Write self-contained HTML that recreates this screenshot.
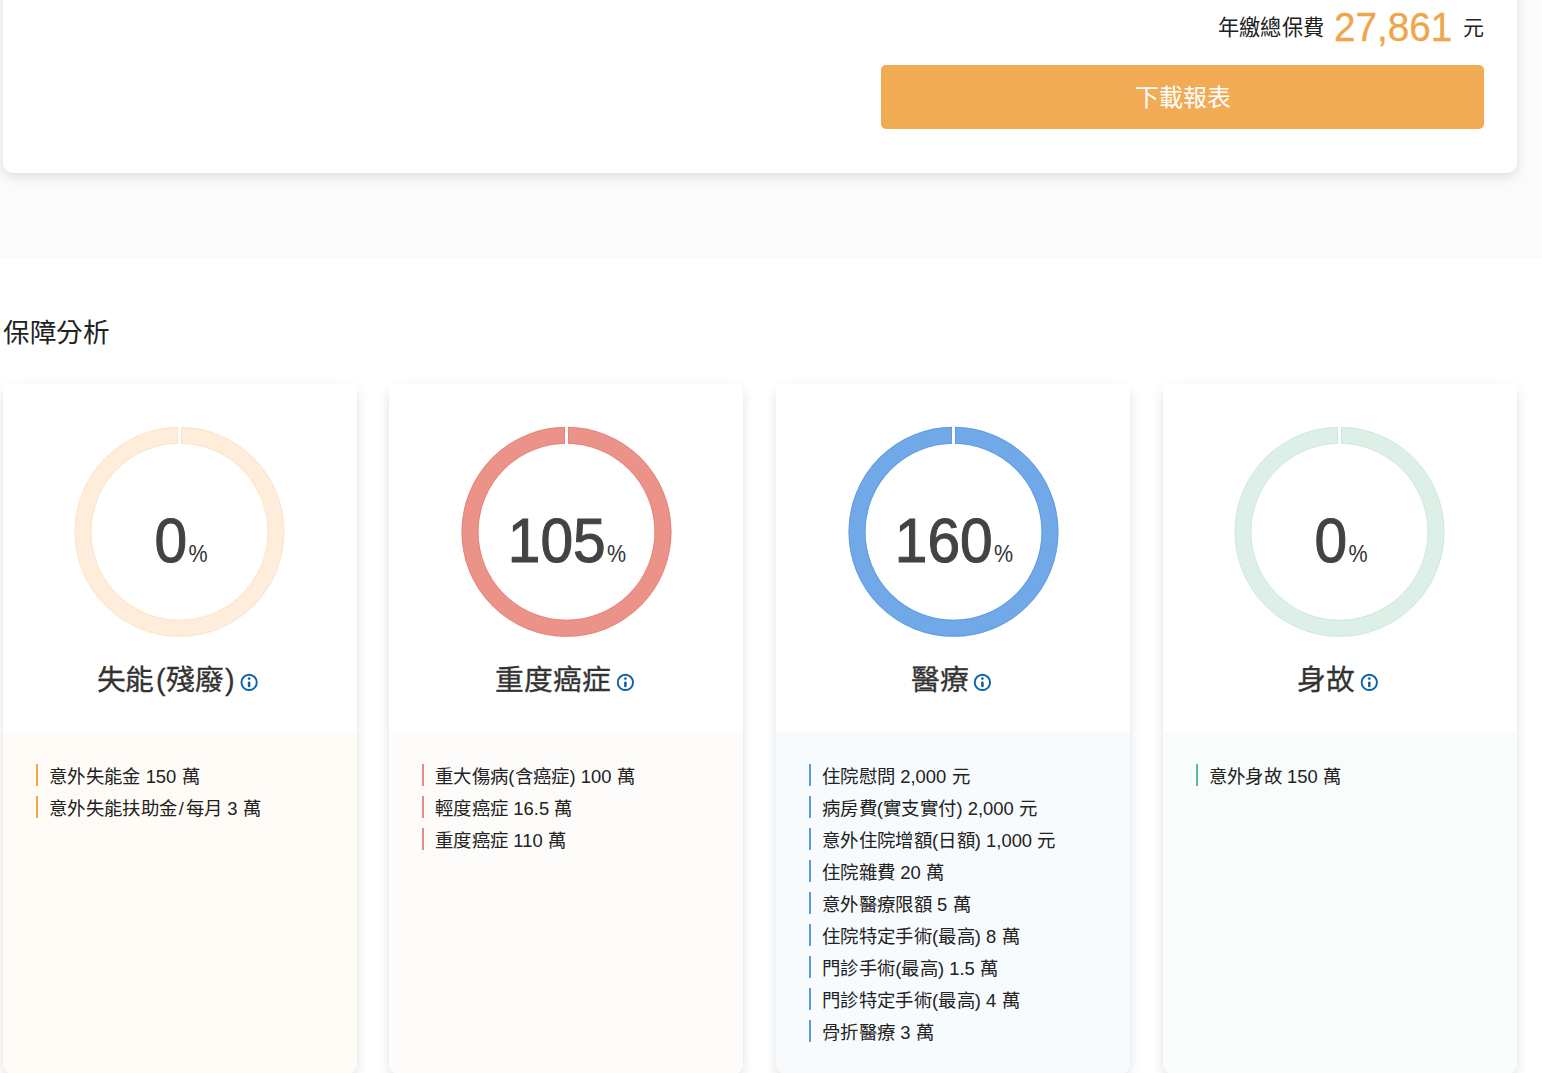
<!DOCTYPE html>
<html lang="zh-TW">
<head>
<meta charset="utf-8">
<title>保障分析</title>
<style>
html,body{margin:0;padding:0;}
html{width:1542px;height:1073px;overflow:hidden;}
body{width:1542px;height:1073px;overflow:hidden;background:#fff;position:relative;
  font-family:"Liberation Sans",sans-serif;color:#222;}
#root{position:absolute;left:0;top:0;width:1542px;height:1073px;overflow:hidden;}
.abs{position:absolute;white-space:nowrap;}
i{display:inline-block;width:1em;text-align:center;font-style:normal;}
.topbg{position:absolute;left:0;top:0;width:1542px;height:258px;background:#fbfbfb;}
.topcard{position:absolute;left:3px;top:-40px;width:1514px;height:213px;background:#fff;
  border-radius:10px;box-shadow:0 4px 12px rgba(0,0,0,.12);}
.lbl{left:1218px;top:13px;font-size:21.2px;line-height:30px;color:#222;}
.amt{left:1334px;top:4px;font-size:40.5px;line-height:46px;color:#f0a549;transform:scaleX(.955);transform-origin:0 50%;-webkit-text-stroke:.3px #f0a549;}
.yuan{left:1463px;top:13px;font-size:21px;line-height:30px;color:#222;}
.btn{position:absolute;left:881px;top:65px;width:603px;height:63.5px;background:#f1ab54;border-radius:5px;
  color:#fff;font-size:24px;line-height:66px;text-align:center;}
.h2{left:3px;top:316px;font-size:26.6px;line-height:34px;color:#222;}
.card{position:absolute;top:383.7px;width:354px;height:690.3px;border-radius:10px;
  box-shadow:0 4px 12px rgba(0,0,0,.12);}
.up{position:absolute;left:0;top:0;width:100%;height:348.3px;background:#fff;}
.low{position:absolute;left:0;top:348.3px;width:100%;height:342px;border-radius:0 0 10px 10px;}
.donut{position:absolute;top:426px;width:212px;height:212px;}
.num{position:absolute;left:1px;top:121.4px;width:100%;text-align:center;white-space:nowrap;
  font-size:63.6px;line-height:70px;color:#434343;transform:scaleX(.923);transform-origin:50% 50%;-webkit-text-stroke:1.1px #434343;}
.num small{font-size:23.3px;color:#333;-webkit-text-stroke:0;margin-left:1.4px;}
.ttl{position:absolute;top:277px;font-size:28.8px;line-height:38px;color:#333;font-weight:500;white-space:nowrap;-webkit-text-stroke:.3px #333;}
.ico{position:absolute;top:671px;width:22px;height:22px;}
ul{list-style:none;margin:0;padding:0;position:absolute;left:33px;top:380.5px;}
li{border-left:2px solid #000;padding-left:10.4px;height:22px;line-height:25.6px;margin-bottom:10px;
  font-size:18.4px;color:#222;white-space:nowrap;}
.k1 li{border-color:#f0a64a}.k2 li{border-color:#e58b83}.k3 li{border-color:#5b9bdf}.k4 li{border-color:#5dba8d}
</style>
</head>
<body>
<div id="root">
<div class="topbg"></div>
<div class="topcard"></div>
<div class="abs lbl"><i>年</i><i>繳</i><i>總</i><i>保</i><i>費</i></div>
<div class="abs amt">27,861</div>
<div class="abs yuan"><i>元</i></div>
<div class="btn"><i>下</i><i>載</i><i>報</i><i>表</i></div>

<div class="abs h2"><i>保</i><i>障</i><i>分</i><i>析</i></div>

<!-- card 1 -->
<div class="card k1" style="left:3.2px">
  <div class="up"></div><div class="low" style="background:#fffcf7"></div>
  <div class="num">0<small>%</small></div>
  <div class="ttl" style="left:93.5px"><i>失</i><i>能</i><span style="margin:0 .5px 0 1.8px">(</span><i>殘</i><i>廢</i><span style="margin-left:1.2px">)</span></div>
  <ul>
    <li><i>意</i><i>外</i><i>失</i><i>能</i><i>金</i> 150 <i>萬</i></li>
    <li><i>意</i><i>外</i><i>失</i><i>能</i><i>扶</i><i>助</i><i>金</i><span style="margin:0 1.5px">/</span><i>每</i><i>月</i> 3 <i>萬</i></li>
  </ul>
</div>

<!-- card 2 -->
<div class="card k2" style="left:389.3px">
  <div class="up"></div><div class="low" style="background:#fdfcfa"></div>
  <div class="num">105<small>%</small></div>
  <div class="ttl" style="left:106px"><i>重</i><i>度</i><i>癌</i><i>症</i></div>
  <ul>
    <li><i>重</i><i>大</i><i>傷</i><i>病</i>(<i>含</i><i>癌</i><i>症</i>) 100 <i>萬</i></li>
    <li><i>輕</i><i>度</i><i>癌</i><i>症</i> 16.5 <i>萬</i></li>
    <li><i>重</i><i>度</i><i>癌</i><i>症</i> 110 <i>萬</i></li>
  </ul>
</div>

<!-- card 3 -->
<div class="card k3" style="left:776.2px">
  <div class="up"></div><div class="low" style="background:#f7fbfe"></div>
  <div class="num">160<small>%</small></div>
  <div class="ttl" style="left:135px"><i>醫</i><i>療</i></div>
  <ul>
    <li><i>住</i><i>院</i><i>慰</i><i>問</i> 2,000 <i>元</i></li>
    <li><i>病</i><i>房</i><i>費</i>(<i>實</i><i>支</i><i>實</i><i>付</i>) 2,000 <i>元</i></li>
    <li><i>意</i><i>外</i><i>住</i><i>院</i><i>增</i><i>額</i>(<i>日</i><i>額</i>) 1,000 <i>元</i></li>
    <li><i>住</i><i>院</i><i>雜</i><i>費</i> 20 <i>萬</i></li>
    <li><i>意</i><i>外</i><i>醫</i><i>療</i><i>限</i><i>額</i> 5 <i>萬</i></li>
    <li><i>住</i><i>院</i><i>特</i><i>定</i><i>手</i><i>術</i>(<i>最</i><i>高</i>) 8 <i>萬</i></li>
    <li><i>門</i><i>診</i><i>手</i><i>術</i>(<i>最</i><i>高</i>) 1.5 <i>萬</i></li>
    <li><i>門</i><i>診</i><i>特</i><i>定</i><i>手</i><i>術</i>(<i>最</i><i>高</i>) 4 <i>萬</i></li>
    <li><i>骨</i><i>折</i><i>醫</i><i>療</i> 3 <i>萬</i></li>
  </ul>
</div>

<!-- card 4 -->
<div class="card k4" style="left:1163px">
  <div class="up"></div><div class="low" style="background:#f8fcfb"></div>
  <div class="num">0<small>%</small></div>
  <div class="ttl" style="left:134.3px"><i>身</i><i>故</i></div>
  <ul>
    <li><i>意</i><i>外</i><i>身</i><i>故</i> 150 <i>萬</i></li>
  </ul>
</div>
<svg class="donut" style="left:74px" viewBox="0 0 212 212"><g fill="none" stroke="#f5a94e" stroke-opacity="0.21"><circle cx="105.5" cy="105.8" r="96.5" stroke-width="17"/><circle cx="105.5" cy="105.8" r="104.5" stroke-width="1" stroke-opacity="0.126"/><circle cx="105.5" cy="105.8" r="88.5" stroke-width="1" stroke-opacity="0.126"/></g><rect x="104" y="-1" width="3" height="20.3" fill="#fff"/><path d="M103.5 1.1V18M107.5 1.1V18" stroke="#f5a94e" stroke-opacity="0.126" stroke-width="1" fill="none"/></svg>
<svg class="donut" style="left:461px" viewBox="0 0 212 212"><g fill="none" stroke="#e57368" stroke-opacity="0.78"><circle cx="105.5" cy="105.8" r="96.5" stroke-width="17"/><circle cx="105.5" cy="105.8" r="104.5" stroke-width="1" stroke-opacity="0.468"/><circle cx="105.5" cy="105.8" r="88.5" stroke-width="1" stroke-opacity="0.468"/></g><rect x="104" y="-1" width="3" height="20.3" fill="#fff"/><path d="M103.5 1.1V18M107.5 1.1V18" stroke="#e57368" stroke-opacity="0.468" stroke-width="1" fill="none"/></svg>
<svg class="donut" style="left:848px" viewBox="0 0 212 212"><g fill="none" stroke="#4a90e2" stroke-opacity="0.79"><circle cx="105.5" cy="105.8" r="96.5" stroke-width="17"/><circle cx="105.5" cy="105.8" r="104.5" stroke-width="1" stroke-opacity="0.474"/><circle cx="105.5" cy="105.8" r="88.5" stroke-width="1" stroke-opacity="0.474"/></g><rect x="104" y="-1" width="3" height="20.3" fill="#fff"/><path d="M103.5 1.1V18M107.5 1.1V18" stroke="#4a90e2" stroke-opacity="0.474" stroke-width="1" fill="none"/></svg>
<svg class="donut" style="left:1234px" viewBox="0 0 212 212"><g fill="none" stroke="#5dba8d" stroke-opacity="0.21"><circle cx="105.5" cy="105.8" r="96.5" stroke-width="17"/><circle cx="105.5" cy="105.8" r="104.5" stroke-width="1" stroke-opacity="0.126"/><circle cx="105.5" cy="105.8" r="88.5" stroke-width="1" stroke-opacity="0.126"/></g><rect x="104" y="-1" width="3" height="20.3" fill="#fff"/><path d="M103.5 1.1V18M107.5 1.1V18" stroke="#5dba8d" stroke-opacity="0.126" stroke-width="1" fill="none"/></svg>
<svg class="ico" style="left:238px" viewBox="0 0 22 22"><circle cx="11.1" cy="11.4" r="7.65" fill="none" stroke="#0b62a8" stroke-width="1.9"/><circle cx="11.1" cy="7.6" r="1.3" fill="#0b62a8"/><path d="M11.1 11.7V15.0" stroke="#0b62a8" stroke-width="2.6" stroke-linecap="round" fill="none"/></svg>
<svg class="ico" style="left:614px" viewBox="0 0 22 22"><circle cx="11.4" cy="11.4" r="7.65" fill="none" stroke="#0b62a8" stroke-width="1.9"/><circle cx="11.4" cy="7.6" r="1.3" fill="#0b62a8"/><path d="M11.4 11.7V15.0" stroke="#0b62a8" stroke-width="2.6" stroke-linecap="round" fill="none"/></svg>
<svg class="ico" style="left:971px" viewBox="0 0 22 22"><circle cx="11.4" cy="11.4" r="7.65" fill="none" stroke="#0b62a8" stroke-width="1.9"/><circle cx="11.4" cy="7.6" r="1.3" fill="#0b62a8"/><path d="M11.4 11.7V15.0" stroke="#0b62a8" stroke-width="2.6" stroke-linecap="round" fill="none"/></svg>
<svg class="ico" style="left:1358px" viewBox="0 0 22 22"><circle cx="11.3" cy="11.4" r="7.65" fill="none" stroke="#0b62a8" stroke-width="1.9"/><circle cx="11.3" cy="7.6" r="1.3" fill="#0b62a8"/><path d="M11.3 11.7V15.0" stroke="#0b62a8" stroke-width="2.6" stroke-linecap="round" fill="none"/></svg>
</div>
</body>
</html>
